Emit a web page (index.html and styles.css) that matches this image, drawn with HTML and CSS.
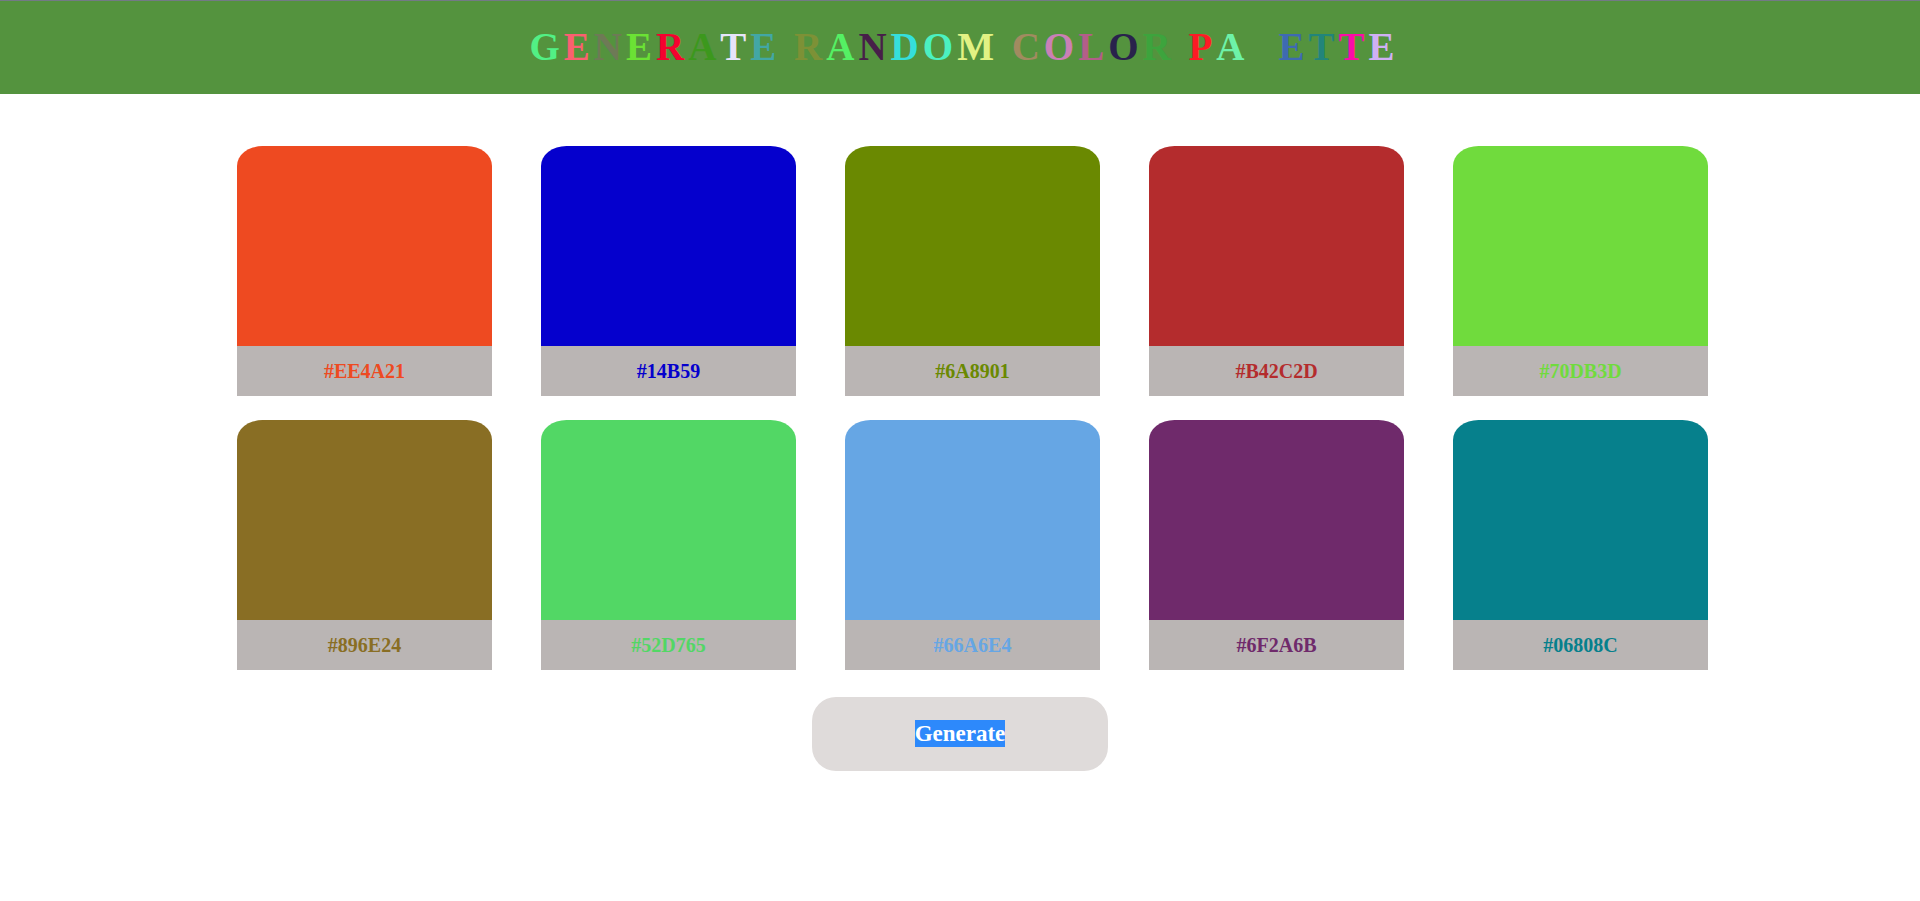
FILE: index.html
```html
<!DOCTYPE html>
<html lang="en">
<head>
<meta charset="utf-8">
<title>Generate Random Color Palette</title>
<link rel="stylesheet" href="styles.css">
</head>
<body>
<header class="header">
<h1 class="title"><span class="c1">G</span><span class="c2">E</span><span class="c3">N</span><span class="c4">E</span><span class="c5">R</span><span class="c6">A</span><span class="c7">T</span><span class="c8">E</span> <span class="c9">R</span><span class="c10">A</span><span class="c11">N</span><span class="c12">D</span><span class="c13">O</span><span class="c14">M</span> <span class="c15">C</span><span class="c16">O</span><span class="c17">L</span><span class="c18">O</span><span class="c19">R</span> <span class="c20">P</span><span class="c21">A</span><span class="c22">L</span><span class="c23">E</span><span class="c24">T</span><span class="c25">T</span><span class="c26">E</span></h1>
</header>
<main>
<section class="palette" aria-label="Color palette">
<article class="card orange"><div class="swatch"></div><p class="code">#EE4A21</p></article>
<article class="card blue"><div class="swatch"></div><p class="code">#14B59</p></article>
<article class="card olive"><div class="swatch"></div><p class="code">#6A8901</p></article>
<article class="card red"><div class="swatch"></div><p class="code">#B42C2D</p></article>
<article class="card lime"><div class="swatch"></div><p class="code">#70DB3D</p></article>
<article class="card brown"><div class="swatch"></div><p class="code">#896E24</p></article>
<article class="card green"><div class="swatch"></div><p class="code">#52D765</p></article>
<article class="card sky"><div class="swatch"></div><p class="code">#66A6E4</p></article>
<article class="card purple"><div class="swatch"></div><p class="code">#6F2A6B</p></article>
<article class="card teal"><div class="swatch"></div><p class="code">#06808C</p></article>
</section>
<div class="actions">
<button class="generate" type="button"><span class="selected">Generate</span></button>
</div>
</main>
</body>
</html>
```
FILE: styles.css
```css
* { box-sizing: border-box; }

body {
  margin: 0;
  background: #fff;
  font-family: "Liberation Serif", "Times New Roman", serif;
}

.header {
  padding: 23px 0 25px 8px;
  border-top: 1px solid #737a86;
  background: #54933e;
}

.title {
  margin: 0;
  font-size: 39px;
  line-height: 45px;
  font-weight: bold;
  font-kerning: none;
  letter-spacing: 4px;
  text-align: center;
}

.c1 { color: #52f085; }
.c2 { color: #fa6070; }
.c3 { color: #6e7a56; }
.c4 { color: #6be234; }
.c5 { color: #f5022f; }
.c6 { color: #3c981d; }
.c7 { color: #e6e4fa; }
.c8 { color: #42a7a5; }
.c9 { color: #7d9136; }
.c10 { color: #55f064; }
.c11 { color: #471f49; }
.c12 { color: #35dfdc; }
.c13 { color: #4bf1c1; }
.c14 { color: #e2f283; }
.c15 { color: #a18b60; }
.c16 { color: #ca80b6; }
.c17 { color: #b35e89; }
.c18 { color: #29224c; }
.c19 { color: #3da43d; }
.c20 { color: #fd1b25; }
.c21 { color: #6ef2a8; }
.c22 { color: #54933e; }
.c23 { color: #3e6ab2; }
.c24 { color: #22857b; }
.c25 { color: #fb0ca8; }
.c26 { color: #cfb0f4; }

.palette {
  display: grid;
  grid-template-columns: repeat(5, 1fr);
  gap: 24px 49px;
  padding: 52px 212px 27px 237px;
}

.swatch {
  height: 200px;
  border-radius: 10% 10% 0 0;
  background: currentColor;
}

.code {
  margin: 0;
  background: #bab5b4;
  font-size: 20px;
  line-height: 50px;
  font-weight: bold;
  text-align: center;
}

.orange { color: #ee4a21; }
.blue { color: #0500cd; }
.olive { color: #6a8901; }
.red { color: #b42c2d; }
.lime { color: #70db3d; }
.brown { color: #896e24; }
.green { color: #52d765; }
.sky { color: #66a6e4; }
.purple { color: #6f2a6b; }
.teal { color: #06808c; }

.actions {
  display: flex;
  justify-content: center;
}

.generate {
  width: 296px;
  padding: 23px 24px 24px;
  border: 0;
  border-radius: 24px;
  background: #dfdbda;
  color: #fff;
  font: bold 23px/27px "Liberation Serif", "Times New Roman", serif;
  cursor: pointer;
}

.selected {
  display: inline-block;
  background: #2d89fb;
}
```
